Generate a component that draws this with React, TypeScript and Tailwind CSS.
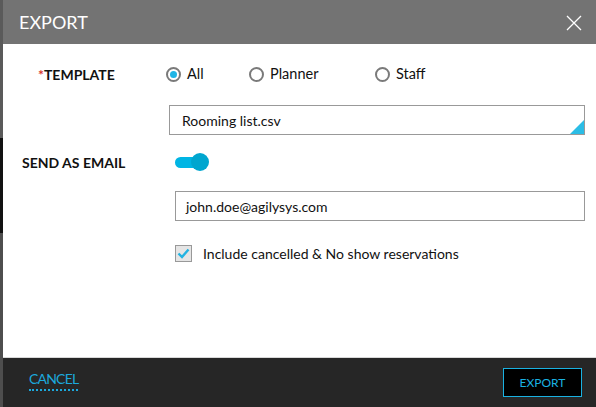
import React from "react";

function Radio({ checked, label, width }: { checked?: boolean; label: string; width: string }) {
  return (
    <div className={`flex items-center ${width}`}>
      <span className="flex h-[15px] w-[15px] items-center justify-center rounded-full border-2 border-[#7a7a7a] bg-white">
        {checked && <span className="h-[7px] w-[7px] rounded-full bg-[#1fb5e6]" />}
      </span>
      <span className="ml-[6px] text-[14.5px] text-[#111]">{label}</span>
    </div>
  );
}

export default function App() {
  return (
    <div
      className="flex h-[407px] w-[596px] overflow-hidden bg-white"
      style={{ fontFamily: "Lato, 'Open Sans', sans-serif" }}
    >
      <div className="flex w-[3px] flex-col bg-[#555]">
        <div className="h-[138px] bg-[#5a5a5a]" />
        <div className="h-[95px] bg-[#111]" />
        <div className="flex-1 bg-[#4e4e4e]" />
      </div>
      <div className="flex flex-1 flex-col">
        <div className="flex h-[44px] items-center justify-between bg-[#737373] pl-[16px] pr-[14px]">
          <span className="text-[18px] text-white">EXPORT</span>
          <svg width="16" height="16" viewBox="0 0 16 16" className="mt-[1px]">
            <path d="M1 1 L15 15 M15 1 L1 15" stroke="#fff" strokeWidth="1.3" fill="none" />
          </svg>
        </div>
        <div className="flex flex-1 flex-col bg-white pt-[20px]">
          <div className="flex h-[20px] items-center pl-[35px]">
            <div className="w-[128px] text-[14px] font-bold text-[#111]">
              <span className="text-[#d9342b]">*</span>TEMPLATE
            </div>
            <Radio checked label="All" width="w-[83px]" />
            <Radio label="Planner" width="w-[126px]" />
            <Radio label="Staff" width="w-[80px]" />
          </div>
          <div className="ml-[166px] mr-[11px] mt-[21px] relative flex h-[30px] items-center border border-[#999] pl-[12px] text-[14px] text-[#111]">
            Rooming list.csv
            <svg width="14" height="14" viewBox="0 0 14 14" className="absolute bottom-0 right-0">
              <path d="M14 0 L14 14 L0 14 Z" fill="#2bbde6" />
            </svg>
          </div>
          <div className="mt-[18px] flex h-[18px] items-center pl-[19px]">
            <div className="w-[153px] text-[14px] font-bold text-[#111]">SEND AS EMAIL</div>
            <div className="relative h-[18px] w-[34px]">
              <div className="absolute left-0 top-[4px] h-[11px] w-[30px] rounded-full bg-[#00b5e4]" />
              <div className="absolute right-0 top-0 h-[18px] w-[18px] rounded-full bg-[#00a6cf]" />
            </div>
          </div>
          <div className="ml-[172px] mr-[11px] mt-[20px] flex h-[30px] items-center border border-[#999] pl-[10px] text-[14px] text-[#111]">
            john.doe@agilysys.com
          </div>
          <div className="ml-[172px] mt-[22px] flex items-center">
            <span className="flex h-[17px] w-[17px] items-center justify-center border border-[#999] bg-[#e5e5e5]">
              <svg width="13" height="11" viewBox="0 0 13 11">
                <path d="M1.5 5.5 L5 9 L11.5 1.5" stroke="#22b3e2" strokeWidth="2.4" fill="none" />
              </svg>
            </span>
            <span className="ml-[11px] text-[14px] text-[#111]">Include cancelled &amp; No show reservations</span>
          </div>
        </div>
        <div className="h-[1px] bg-[#d8d8d8]" />
        <div className="flex h-[49px] items-center justify-between bg-[#262626] pl-[26px] pr-[14px]">
          <span className="mb-[4px] border-b-2 border-dotted border-[#1ca8dc] pb-[2px] text-[14px] leading-[16px] tracking-[-0.8px] text-[#1ca8dc]">
            CANCEL
          </span>
          <div className="flex h-[29px] w-[79px] items-center justify-center border border-[#1ab2e2] bg-black text-[12px] text-[#1ab2e2]">
            EXPORT
          </div>
        </div>
      </div>
    </div>
  );
}
